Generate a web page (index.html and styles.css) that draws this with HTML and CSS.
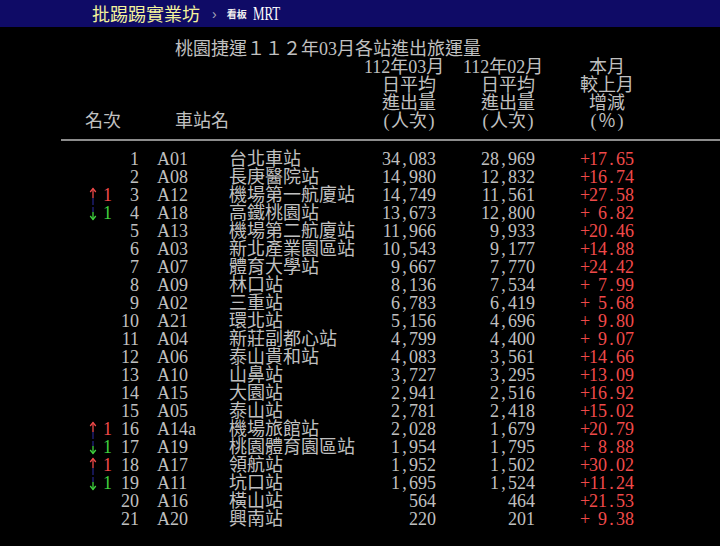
FILE: index.html
```html
<!DOCTYPE html>
<html lang="zh-Hant">
<head>
<meta charset="utf-8">
<title>MRT - 批踢踢實業坊</title>
<link rel="stylesheet" href="styles.css">
</head>
<body>
<div class="topbar">
  <span class="logo">批踢踢實業坊</span>
  <span class="crumb">›</span>
  <span class="board-label">看板</span>
  <span class="board">MRT</span>
</div>

<div class="article">
  <div class="head">
    <div class="title">桃園捷運１１２年03月各站進出旅運量</div>
    <div class="h-rank">名次</div>
    <div class="h-name">車站名</div>
    <div class="h-col h-mar">
      <div>112年03月</div>
      <div class="in2">日平均</div>
      <div class="in2">進出量</div>
      <div class="in2"><span class="pc">(</span>人次<span class="pc">)</span></div>
    </div>
    <div class="h-col h-feb">
      <div>112年02月</div>
      <div class="in2">日平均</div>
      <div class="in2">進出量</div>
      <div class="in2"><span class="pc">(</span>人次<span class="pc">)</span></div>
    </div>
    <div class="h-col h-pct">
      <div class="in1">本月</div>
      <div>較上月</div>
      <div class="in1">增減</div>
      <div class="in1"><span class="pc">(</span>％<span class="pc">)</span></div>
    </div>
  </div>

  <div class="sep"></div>

  <div class="rows">
    <div class="r"><span class="rk">1</span><span class="cd">A01</span><span class="nm">台北車站</span><span class="m">34<span class="pc">,</span>083</span><span class="f">28<span class="pc">,</span>969</span><span class="p"><span class="sg">+</span><span>17<span class="pc">.</span>65</span></span></div>
    <div class="r"><span class="rk">2</span><span class="cd">A08</span><span class="nm">長庚醫院站</span><span class="m">14<span class="pc">,</span>980</span><span class="f">12<span class="pc">,</span>832</span><span class="p"><span class="sg">+</span><span>16<span class="pc">.</span>74</span></span></div>
    <div class="r"><span class="chg up"><svg class="arrow" viewBox="0 0 18 18" width="18" height="18"><path d="M8 2.5V12" stroke="#f04a4a"/><path d="M8 12V19" stroke="#23237f"/><path d="M5.2 6L8 2.5L10.8 6" stroke="#f04a4a" fill="none"/></svg><span class="n">1</span></span><span class="rk">3</span><span class="cd">A12</span><span class="nm">機場第一航廈站</span><span class="m">14<span class="pc">,</span>749</span><span class="f">11<span class="pc">,</span>561</span><span class="p"><span class="sg">+</span><span>27<span class="pc">.</span>58</span></span></div>
    <div class="r"><span class="chg down"><svg class="arrow" viewBox="0 0 18 18" width="18" height="18"><path d="M8 3V8" stroke="#23237f"/><path d="M8 8V15.5" stroke="#3fd23f"/><path d="M5.2 12L8 15.5L10.8 12" stroke="#3fd23f" fill="none"/></svg><span class="n">1</span></span><span class="rk">4</span><span class="cd">A18</span><span class="nm">高鐵桃園站</span><span class="m">13<span class="pc">,</span>673</span><span class="f">12<span class="pc">,</span>800</span><span class="p"><span class="sg">+</span><span>6<span class="pc">.</span>82</span></span></div>
    <div class="r"><span class="rk">5</span><span class="cd">A13</span><span class="nm">機場第二航廈站</span><span class="m">11<span class="pc">,</span>966</span><span class="f">9<span class="pc">,</span>933</span><span class="p"><span class="sg">+</span><span>20<span class="pc">.</span>46</span></span></div>
    <div class="r"><span class="rk">6</span><span class="cd">A03</span><span class="nm">新北產業園區站</span><span class="m">10<span class="pc">,</span>543</span><span class="f">9<span class="pc">,</span>177</span><span class="p"><span class="sg">+</span><span>14<span class="pc">.</span>88</span></span></div>
    <div class="r"><span class="rk">7</span><span class="cd">A07</span><span class="nm">體育大學站</span><span class="m">9<span class="pc">,</span>667</span><span class="f">7<span class="pc">,</span>770</span><span class="p"><span class="sg">+</span><span>24<span class="pc">.</span>42</span></span></div>
    <div class="r"><span class="rk">8</span><span class="cd">A09</span><span class="nm">林口站</span><span class="m">8<span class="pc">,</span>136</span><span class="f">7<span class="pc">,</span>534</span><span class="p"><span class="sg">+</span><span>7<span class="pc">.</span>99</span></span></div>
    <div class="r"><span class="rk">9</span><span class="cd">A02</span><span class="nm">三重站</span><span class="m">6<span class="pc">,</span>783</span><span class="f">6<span class="pc">,</span>419</span><span class="p"><span class="sg">+</span><span>5<span class="pc">.</span>68</span></span></div>
    <div class="r"><span class="rk">10</span><span class="cd">A21</span><span class="nm">環北站</span><span class="m">5<span class="pc">,</span>156</span><span class="f">4<span class="pc">,</span>696</span><span class="p"><span class="sg">+</span><span>9<span class="pc">.</span>80</span></span></div>
    <div class="r"><span class="rk">11</span><span class="cd">A04</span><span class="nm">新莊副都心站</span><span class="m">4<span class="pc">,</span>799</span><span class="f">4<span class="pc">,</span>400</span><span class="p"><span class="sg">+</span><span>9<span class="pc">.</span>07</span></span></div>
    <div class="r"><span class="rk">12</span><span class="cd">A06</span><span class="nm">泰山貴和站</span><span class="m">4<span class="pc">,</span>083</span><span class="f">3<span class="pc">,</span>561</span><span class="p"><span class="sg">+</span><span>14<span class="pc">.</span>66</span></span></div>
    <div class="r"><span class="rk">13</span><span class="cd">A10</span><span class="nm">山鼻站</span><span class="m">3<span class="pc">,</span>727</span><span class="f">3<span class="pc">,</span>295</span><span class="p"><span class="sg">+</span><span>13<span class="pc">.</span>09</span></span></div>
    <div class="r"><span class="rk">14</span><span class="cd">A15</span><span class="nm">大園站</span><span class="m">2<span class="pc">,</span>941</span><span class="f">2<span class="pc">,</span>516</span><span class="p"><span class="sg">+</span><span>16<span class="pc">.</span>92</span></span></div>
    <div class="r"><span class="rk">15</span><span class="cd">A05</span><span class="nm">泰山站</span><span class="m">2<span class="pc">,</span>781</span><span class="f">2<span class="pc">,</span>418</span><span class="p"><span class="sg">+</span><span>15<span class="pc">.</span>02</span></span></div>
    <div class="r"><span class="chg up"><svg class="arrow" viewBox="0 0 18 18" width="18" height="18"><path d="M8 2.5V12" stroke="#f04a4a"/><path d="M8 12V19" stroke="#23237f"/><path d="M5.2 6L8 2.5L10.8 6" stroke="#f04a4a" fill="none"/></svg><span class="n">1</span></span><span class="rk">16</span><span class="cd">A14a</span><span class="nm">機場旅館站</span><span class="m">2<span class="pc">,</span>028</span><span class="f">1<span class="pc">,</span>679</span><span class="p"><span class="sg">+</span><span>20<span class="pc">.</span>79</span></span></div>
    <div class="r"><span class="chg down"><svg class="arrow" viewBox="0 0 18 18" width="18" height="18"><path d="M8 3V8" stroke="#23237f"/><path d="M8 8V15.5" stroke="#3fd23f"/><path d="M5.2 12L8 15.5L10.8 12" stroke="#3fd23f" fill="none"/></svg><span class="n">1</span></span><span class="rk">17</span><span class="cd">A19</span><span class="nm">桃園體育園區站</span><span class="m">1<span class="pc">,</span>954</span><span class="f">1<span class="pc">,</span>795</span><span class="p"><span class="sg">+</span><span>8<span class="pc">.</span>88</span></span></div>
    <div class="r"><span class="chg up"><svg class="arrow" viewBox="0 0 18 18" width="18" height="18"><path d="M8 2.5V12" stroke="#f04a4a"/><path d="M8 12V19" stroke="#23237f"/><path d="M5.2 6L8 2.5L10.8 6" stroke="#f04a4a" fill="none"/></svg><span class="n">1</span></span><span class="rk">18</span><span class="cd">A17</span><span class="nm">領航站</span><span class="m">1<span class="pc">,</span>952</span><span class="f">1<span class="pc">,</span>502</span><span class="p"><span class="sg">+</span><span>30<span class="pc">.</span>02</span></span></div>
    <div class="r"><span class="chg down"><svg class="arrow" viewBox="0 0 18 18" width="18" height="18"><path d="M8 3V8" stroke="#23237f"/><path d="M8 8V15.5" stroke="#3fd23f"/><path d="M5.2 12L8 15.5L10.8 12" stroke="#3fd23f" fill="none"/></svg><span class="n">1</span></span><span class="rk">19</span><span class="cd">A11</span><span class="nm">坑口站</span><span class="m">1<span class="pc">,</span>695</span><span class="f">1<span class="pc">,</span>524</span><span class="p"><span class="sg">+</span><span>11<span class="pc">.</span>24</span></span></div>
    <div class="r"><span class="rk">20</span><span class="cd">A16</span><span class="nm">橫山站</span><span class="m">564</span><span class="f">464</span><span class="p"><span class="sg">+</span><span>21<span class="pc">.</span>53</span></span></div>
    <div class="r"><span class="rk">21</span><span class="cd">A20</span><span class="nm">興南站</span><span class="m">220</span><span class="f">201</span><span class="p"><span class="sg">+</span><span>9<span class="pc">.</span>38</span></span></div>
  </div>
</div>
</body>
</html>
```

FILE: styles.css
```css
* { box-sizing: border-box; }

html, body {
  margin: 0;
  background: #000;
}

body {
  color: #c0c0c0;
  font-family: "Liberation Serif", "Noto Sans CJK TC", serif;
  font-size: 18px;
  line-height: 18px;
  overflow: hidden;
}

/* ---------- top bar ---------- */
.topbar {
  height: 27px;
  background: #0f0b66;
  display: flex;
  align-items: center;
  padding-left: 92px;
  white-space: nowrap;
}

.logo {
  font-family: "Noto Sans CJK TC", sans-serif;
  font-size: 18px;
  line-height: 27px;
  color: #f4f49c;
}

.crumb {
  margin-left: 12px;
  font-family: "Liberation Sans", sans-serif;
  font-size: 14px;
  color: #a8a8b8;
}

.board-label {
  margin-left: 10px;
  font-family: "Noto Sans CJK TC", sans-serif;
  font-size: 10px;
  font-weight: 700;
  color: #eee;
}

.board {
  display: inline-block;
  margin-left: 6px;
  font-size: 19px;
  color: #fff;
  transform: scaleX(0.68);
  transform-origin: left center;
}

/* ---------- article ---------- */
.article {
  padding-top: 13px;
}

.pc {
  display: inline-block;
  width: 9px;
  text-align: center;
}

.head {
  display: grid;
  grid-template-columns: 85px 90px 189px 99px 117px 1fr;
  grid-template-rows: repeat(5, 18px);
  white-space: nowrap;
}

.title {
  grid-row: 1;
  grid-column: 3 / -1;
}

.h-rank {
  grid-row: 5;
  grid-column: 2;
}

.h-name {
  grid-row: 5;
  grid-column: 3;
}

.h-col {
  grid-row: 2 / 6;
  display: flex;
  flex-direction: column;
}

.h-mar { grid-column: 4; }
.h-feb { grid-column: 5; }
.h-pct { grid-column: 6; }

.in1 { padding-left: 9px; }
.in2 { padding-left: 18px; }

.sep {
  margin: 9px 0 9px 61px;
  border-top: 2px solid #8c8c8c;
}

/* ---------- rows ---------- */
.rows {
  padding-left: 85px;
}

.r {
  display: grid;
  grid-template-columns: 36px 18px 18px 72px 135px 72px 99px 45px 54px;
  height: 18px;
  white-space: nowrap;
}

.chg {
  grid-column: 1;
  display: flex;
  align-items: flex-start;
}

.arrow {
  display: block;
  overflow: visible;
  stroke-width: 1.3;
  flex: none;
}

.chg .n {
  width: 9px;
  text-align: center;
}

.up .n { color: #f04a4a; }
.down .n { color: #3fd23f; }

.rk {
  grid-column: 2;
  text-align: right;
}

.cd { grid-column: 4; }
.nm { grid-column: 5; }

.m {
  grid-column: 6;
  text-align: right;
}

.f {
  grid-column: 7;
  text-align: right;
}

.p {
  grid-column: 9;
  display: flex;
  justify-content: space-between;
  color: #f04a4a;
}

.sg {
  display: inline-block;
  width: 9px;
}
```
